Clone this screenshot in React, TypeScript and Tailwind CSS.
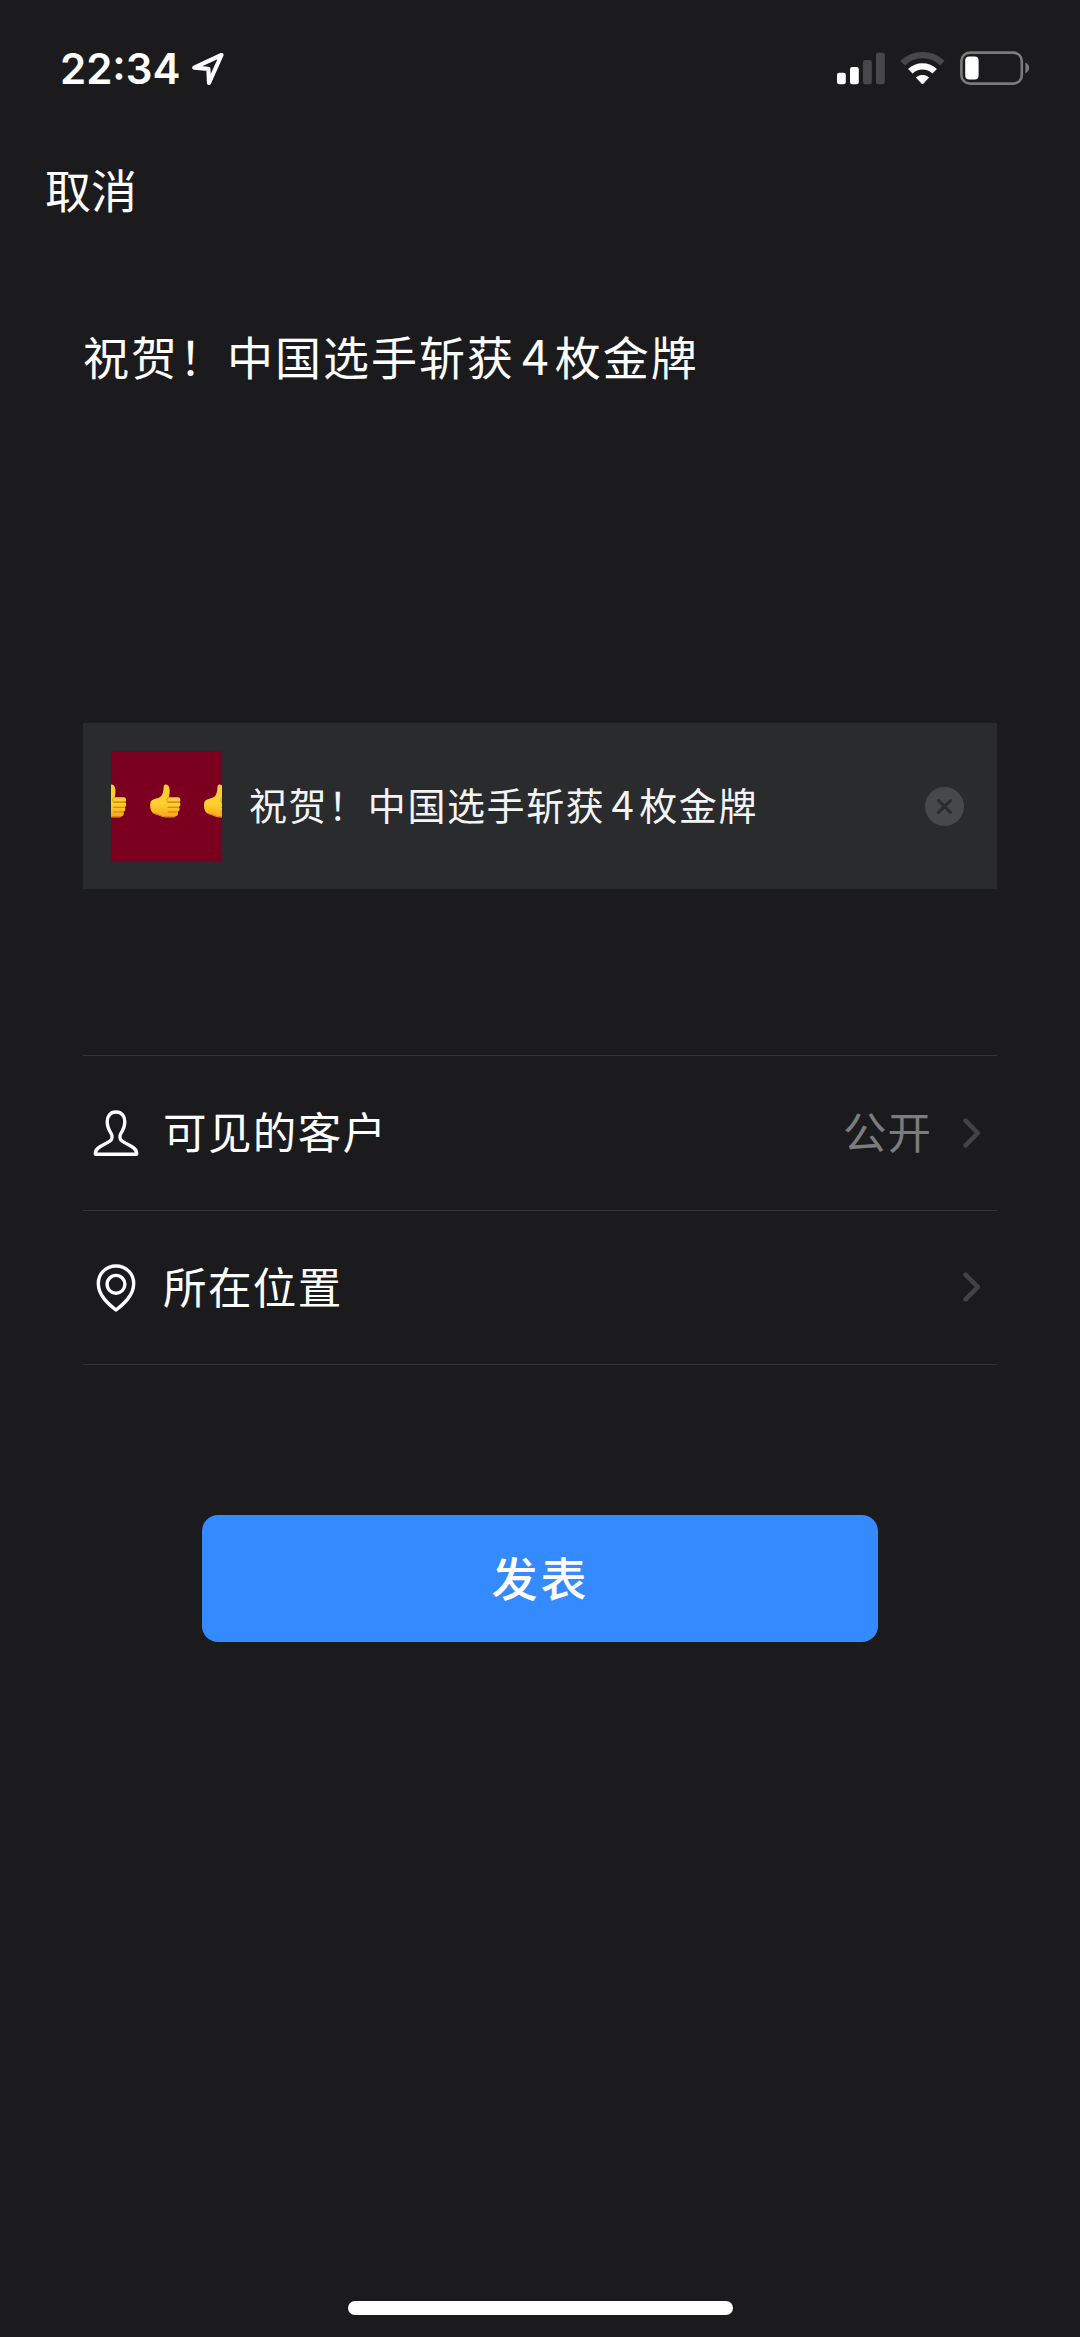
import React from "react";

const cjk = "font-['Noto_Sans_CJK_SC',sans-serif]";

function LocationArrow() {
  return (
    <svg className="ml-[11px] mt-[1px]" width="34" height="34" viewBox="0 0 34 34" fill="none">
      <path
        d="M30.5 3 L3.2 15.6 L17.4 16.8 L18 31 Z"
        stroke="#fff"
        strokeWidth="4.2"
        strokeLinejoin="round"
      />
    </svg>
  );
}

function Signal() {
  return (
    <svg width="49" height="34" viewBox="0 0 49 34">
      <rect x="0" y="21.8" width="8.8" height="11.4" rx="2.2" fill="#fff" />
      <rect x="13" y="16" width="8.8" height="17.2" rx="2.2" fill="#fff" />
      <rect x="26" y="9" width="8.8" height="24.2" rx="2.2" fill="#48484a" />
      <rect x="39" y="1.8" width="8.8" height="31.4" rx="2.2" fill="#48484a" />
    </svg>
  );
}

function Wifi() {
  return (
    <svg width="46" height="34" viewBox="0 0 46 34">
      <path d="M2.6 12.2 A28.6 28.6 0 0 1 42.4 12.2" fill="none" stroke="#48484a" strokeWidth="6.4" />
      <path d="M10.3 20.3 A17.6 17.6 0 0 1 34.7 20.3" fill="none" stroke="#fff" strokeWidth="6.4" />
      <path d="M16.4 26.6 A9.5 9.5 0 0 1 28.6 26.6 L22.5 33 Z" fill="#fff" stroke="#fff" strokeWidth="1" strokeLinejoin="round" />
    </svg>
  );
}

function Battery() {
  return (
    <svg width="71" height="34" viewBox="0 0 71 34">
      <rect x="1.4" y="1.6" width="60.4" height="31" rx="8.4" fill="none" stroke="#7b7b7d" strokeWidth="2.6" />
      <rect x="5.2" y="5.4" width="13.4" height="23.2" rx="4" fill="#fff" />
      <path d="M65.4 11.6 C70.4 13.4 70.4 20.4 65.4 22.4 Z" fill="#7b7b7d" />
    </svg>
  );
}

function PersonIcon() {
  return (
    <svg className="mt-[1px]" width="46" height="47" viewBox="0 0 46 47" fill="none" stroke="#fff" strokeWidth="3.4" strokeLinejoin="round">
      <path d="M23 2 C17 2 14.2 6.2 14.2 11.8 C14.2 17.5 15.8 20 18.2 23.6 C19.8 26 19.2 29.6 16.8 31.2 C11.4 34.8 2.4 37.4 2.4 43 V44.2 H43.6 V43 C43.6 37.4 34.6 34.8 29.2 31.2 C26.8 29.6 26.2 26 27.8 23.6 C30.2 20 31.8 17.5 31.8 11.8 C31.8 6.2 29 2 23 2 Z" />
    </svg>
  );
}

function PinIcon() {
  return (
    <svg className="mt-[3px]" width="46" height="49" viewBox="0 0 46 49" fill="none" stroke="#fff" strokeWidth="3.4" strokeLinejoin="round">
      <path d="M23 2 C12.8 2 5.3 9.8 5.3 19.5 C5.3 31 14.6 39.4 23 46 C31.4 39.4 40.7 31 40.7 19.5 C40.7 9.8 33.2 2 23 2 Z" />
      <circle cx="23" cy="20.3" r="8.9" />
    </svg>
  );
}

function Chevron() {
  return (
    <svg width="18" height="30" viewBox="0 0 18 30" fill="none">
      <path d="M2.6 2.7 L14.8 15 L2.6 27.3" stroke="#434345" strokeWidth="4.6" strokeLinecap="round" strokeLinejoin="round" />
    </svg>
  );
}

function Thumb({ x }: { x: number }) {
  return (
    <g transform={`translate(${x} 33)`}>
      <path
        d="M1 18 C3 14.8 8 15.6 11 13 C14 10 13.6 5.5 14 2.6 C14.4 0 18.6 -0.2 19.6 4 C20.6 8 19.6 11 19.4 13.6 H28.4 C31 13.6 31.6 17.2 29.8 18.4 C31.4 20 31.2 22.4 29.4 23.6 C30.6 25.4 30 27.6 28.2 28.4 C29 31 27.6 33.4 25 33.4 H16 C11 33.4 9 30.6 5 30.4 C1.4 30.2 -1 23 1 18 Z"
        fill="url(#skin)"
      />
      <path d="M18.4 18.6 H29.4 M18.4 23.7 H29 M18.4 28.6 H27.8" stroke="#c87d12" strokeWidth="1.1" strokeLinecap="round" />
      <path d="M19.4 13.6 C17 14.4 16.6 17 18.2 18.6" stroke="#e59b12" strokeWidth="1.1" fill="none" />
      <path d="M5 30.4 C9 30.6 11 33.4 16 33.4 H25" stroke="#dd8f14" strokeWidth="1.2" fill="none" />
    </g>
  );
}

function Cover() {
  return (
    <svg className="shrink-0" width="111" height="111" viewBox="0 0 112 112">
      <defs>
        <linearGradient id="skin" x1="0" y1="0" x2="0" y2="1">
          <stop offset="0" stopColor="#ffc93a" />
          <stop offset="0.6" stopColor="#ffd02e" />
          <stop offset="1" stopColor="#f5a81c" />
        </linearGradient>
      </defs>
      <rect width="112" height="112" fill="#7b0020" />
      <Thumb x={-15.5} />
      <Thumb x={39.2} />
      <Thumb x={93.5} />
    </svg>
  );
}

function Row({ icon, label, value }: { icon: React.ReactNode; label: string; value?: string }) {
  return (
    <div className="flex h-[154.5px] items-center border-b border-[#343436] pl-[10px] pr-[16px]">
      {icon}
      <span className="mb-[3px] ml-[24px] text-[43.5px] leading-[60px] tracking-[1.4px] text-white">{label}</span>
      <span className="mb-[4px] ml-auto mr-[31px] text-[43.5px] leading-[60px] tracking-[1px] text-[#7c7c80]">{value}</span>
      <Chevron />
    </div>
  );
}

export default function App() {
  return (
    <div className={`flex h-[2337px] w-[1080px] flex-col overflow-hidden bg-[#1b1b1d] ${cjk}`}>
      <header className="flex h-[138px] items-start pl-[60px] pr-[49px] pt-[51px]">
        <span className="mt-[-7px] font-['Inter',sans-serif] text-[42px] font-semibold leading-[50px] text-white">22:34</span>
        <LocationArrow />
        <div className="ml-auto flex items-start">
          <Signal />
          <div className="ml-[14px]"><Wifi /></div>
          <div className="ml-[14px]"><Battery /></div>
        </div>
      </header>

      <nav className="h-[152px] px-[45px] pt-[17px]">
        <button className="block text-[46px] leading-[66px] text-white">取消</button>
      </nav>

      <main className="flex flex-col px-[83px]">
        <div className="h-[433px] pt-[31px] text-[46px] leading-[66px] tracking-[2px] text-white">
          祝贺！中国选手斩获<span className="ml-[7px] mr-[4px] text-[48px]">4</span>枚金牌
        </div>

        <section className="flex h-[166px] items-center bg-[#292b2c] pl-[28px] pr-[33px]">
          <Cover />
          <span className="mb-[6px] ml-[27px] text-[38px] leading-[54px] tracking-[1.6px] text-[#f4f4f6]">
            祝贺！中国选手斩获<span className="ml-[6px] mr-[4px] text-[40px]">4</span>枚金牌
          </span>
          <svg className="ml-auto" width="39" height="39" viewBox="0 0 39 39">
            <circle cx="19.5" cy="19.5" r="19.5" fill="#47484b" />
            <path d="M13.5 13.5 L25.5 25.5 M25.5 13.5 L13.5 25.5" stroke="#292b2c" strokeWidth="3" strokeLinecap="round" />
          </svg>
        </section>

        <section className="mt-[166px] border-t border-[#343436]">
          <Row icon={<PersonIcon />} label="可见的客户" value="公开" />
          <Row icon={<PinIcon />} label="所在位置" />
        </section>

        <button className="mt-[150px] h-[127px] w-[676px] self-center rounded-[16px] bg-[#338bff] pb-[5px] pl-[1px] text-[46px] font-medium leading-[66px] tracking-[3px] text-white">
          发表
        </button>
      </main>

      <div className="mb-[22px] mt-auto h-[14px] w-[385px] self-center rounded-full bg-white" />
    </div>
  );
}
